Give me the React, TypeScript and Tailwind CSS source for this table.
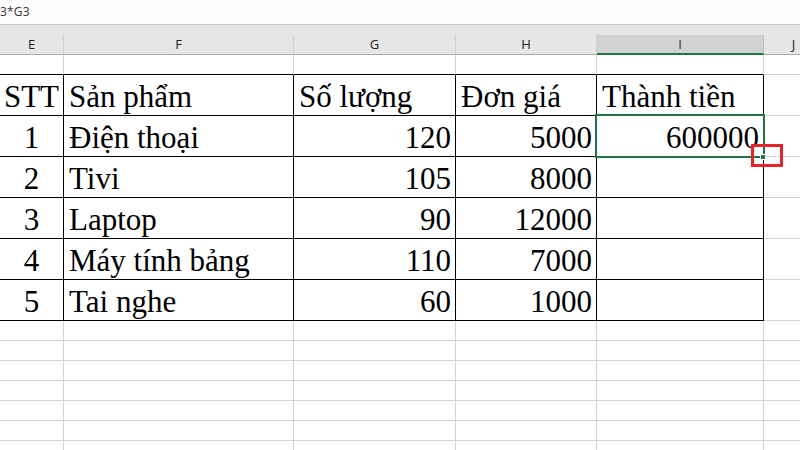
import React from "react";

const COLS = [64, 230, 162, 141, 167, 60];
const LETTERS = ["E", "F", "G", "H", "I", "J"];

type Align = "left" | "center" | "right";
const ALIGNS: Align[] = ["center", "left", "right", "right", "right", "left"];

const HEAD = ["STT", "Sản phẩm", "Số lượng", "Đơn giá", "Thành tiền", ""];
const DATA: string[][] = [
  ["1", "Điện thoại", "120", "5000", "600000", ""],
  ["2", "Tivi", "105", "8000", "", ""],
  ["3", "Laptop", "90", "12000", "", ""],
  ["4", "Máy tính bảng", "110", "7000", "", ""],
  ["5", "Tai nghe", "60", "1000", "", ""],
];

function Cell({
  w,
  h,
  text,
  align,
  rightBlack,
  bottomBlack,
}: {
  w: number;
  h: number;
  text?: string;
  align?: Align;
  rightBlack: boolean;
  bottomBlack: boolean;
}) {
  const justify =
    align === "center" ? "justify-center" : align === "right" ? "justify-end pr-[4px]" : "justify-start pl-[5px]";
  return (
    <div
      className={`shrink-0 box-border border-r border-b flex items-end pb-[3px] overflow-visible whitespace-nowrap ${justify} ${
        rightBlack ? "border-r-black" : "border-r-[#d4d4d4]"
      } ${bottomBlack ? "border-b-black" : "border-b-[#d4d4d4]"}`}
      style={{ width: w, height: h }}
    >
      {text ? (
        <span className="font-['Liberation_Serif','Times_New_Roman',serif] text-[31px] leading-[31px] text-black">
          {text}
        </span>
      ) : null}
    </div>
  );
}

export default function App() {
  const tableRows = [HEAD, ...DATA];
  return (
    <div className="relative w-[800px] h-[450px] overflow-hidden bg-white font-['Open_Sans','Noto_Sans',sans-serif]">
      {/* formula bar */}
      <div className="h-[25px] box-border border-b border-[#c8c8c8] bg-[#fcfcfc] flex items-center">
        <span className="text-[12px] text-[#333] tracking-[0.2px]">3*G3</span>
      </div>
      {/* column headers */}
      <div className="bg-[#e6e6e6]">
        <div className="h-[10px]" />
        <div className="flex h-[20px]">
          {COLS.map((w, i) => (
            <div
              key={i}
              className={`shrink-0 box-border flex items-center justify-center text-[13px] leading-none ${
                i === 4
                  ? "bg-[#d2d2d2] border-b-2 border-b-[#217346] text-[#333] border-r border-r-[#bdbdbd]"
                  : "border-b border-b-[#ababab] text-[#222] border-r border-r-[#cfcfcf]"
              }`}
              style={{ width: w }}
            >
              {LETTERS[i]}
            </div>
          ))}
        </div>
      </div>
      {/* row 1 empty */}
      <div className="flex">
        {COLS.map((w, i) => (
          <Cell key={i} w={w} h={20} rightBlack={false} bottomBlack={i < 5} />
        ))}
      </div>
      {/* table rows */}
      {tableRows.map((r, ri) => (
        <div className="flex" key={ri}>
          {COLS.map((w, i) => (
            <Cell
              key={i}
              w={w}
              h={41}
              text={r[i]}
              align={ri === 0 && i > 0 ? "left" : ALIGNS[i]}
              rightBlack={i < 5}
              bottomBlack={i < 5}
            />
          ))}
        </div>
      ))}
      {/* empty rows */}
      {Array.from({ length: 7 }).map((_, ri) => (
        <div className="flex" key={"e" + ri}>
          {COLS.map((w, i) => (
            <Cell key={i} w={w} h={20} rightBlack={false} bottomBlack={false} />
          ))}
        </div>
      ))}
      {/* selection box */}
      <div className="absolute left-[595px] top-[114px] w-[170px] h-[44px] border-2 border-[#217346] pointer-events-none" />
      {/* fill handle */}
      <div className="absolute left-[760px] top-[154px] w-[6px] h-[6px] bg-[#217346] border border-white" />
      {/* red highlight */}
      <div className="absolute left-[751px] top-[144px] w-[32px] h-[23px] border-[3px] border-[#e0262c]" />
    </div>
  );
}
